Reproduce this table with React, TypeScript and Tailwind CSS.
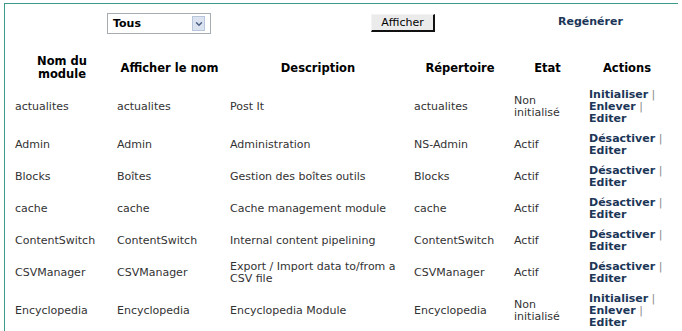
import { ChevronDown } from "lucide-react";

type Mod = {
  name: string;
  label: string;
  desc: string;
  dir: string;
  active: boolean;
};

const modules: Mod[] = [
  { name: "actualites", label: "actualites", desc: "Post It", dir: "actualites", active: false },
  { name: "Admin", label: "Admin", desc: "Administration", dir: "NS-Admin", active: true },
  { name: "Blocks", label: "Boîtes", desc: "Gestion des boîtes outils", dir: "Blocks", active: true },
  { name: "cache", label: "cache", desc: "Cache management module", dir: "cache", active: true },
  { name: "ContentSwitch", label: "ContentSwitch", desc: "Internal content pipelining", dir: "ContentSwitch", active: true },
  { name: "CSVManager", label: "CSVManager", desc: "Export / Import data to/from a CSV file", dir: "CSVManager", active: true },
  { name: "Encyclopedia", label: "Encyclopedia", desc: "Encyclopedia Module", dir: "Encyclopedia", active: false },
];

function Actions({ active }: { active: boolean }) {
  const link = "font-bold text-[#1c3657]";
  const sep = <span className="text-[#8a8a8a]"> |</span>;
  if (active) {
    return (
      <>
        <span className={link}>Désactiver</span>
        {sep}
        <br />
        <span className={link}>Editer</span>
      </>
    );
  }
  return (
    <>
      <span className={link}>Initialiser</span>
      {sep}
      <br />
      <span className={link}>Enlever</span>
      {sep}
      <br />
      <span className={link}>Editer</span>
    </>
  );
}

export default function App() {
  const th = "px-1 pt-[5px] pb-[4px] text-center align-middle font-bold text-[11.5px] leading-[13px] text-black";
  const td = "px-1 py-1 align-middle";

  return (
    <div className="w-[682px] h-[331px] overflow-hidden bg-white font-['DejaVu_Sans',Verdana,sans-serif] text-[11px] leading-[12px] text-[#333]">
      <div className="ml-1 mt-[3px] h-[400px] border-t border-l border-[#3a9b8c] w-[674px]">
        {/* ── filtre ─────────────────────────────────────────── */}
        <div className="flex items-start h-[46px]">
          <div className="ml-[102px] mt-[9px] flex h-[21px] w-[104px] items-center justify-between border border-[#a5acb2] bg-white pl-[5px] pr-[5px]">
            <span className="font-bold text-black">Tous</span>
            <span className="flex h-[15px] w-[13px] items-center justify-center border border-[#b8c6dc] bg-[#dbe3f0]">
              <ChevronDown className="h-[10px] w-[10px] text-[#4d6185]" strokeWidth={3.5} />
            </span>
          </div>
          <button className="ml-[160px] mt-[10px] h-[18px] w-[64px] border border-t-[#f3f3f3] border-l-[#f3f3f3] border-r-[#111] border-b-[#111] border-r-2 border-b-2 bg-[#ebebeb] text-[11px] leading-[12px] text-black">
            Afficher
          </button>
          <span className="ml-[123px] mt-[12px] font-bold text-[#1c3657]">Regénérer</span>
        </div>

        {/* ── tableau des modules ────────────────────────────── */}
        <table className="ml-[6px] w-[658px] table-fixed border-collapse">
          <colgroup>
            <col className="w-[102px]" />
            <col className="w-[113px]" />
            <col className="w-[184px]" />
            <col className="w-[100px]" />
            <col className="w-[75px]" />
            <col className="w-[84px]" />
          </colgroup>
          <thead>
            <tr>
              <th className={th}>
                Nom du
                <br />
                module
              </th>
              <th className={th}>Afficher le nom</th>
              <th className={th}>Description</th>
              <th className={th}>Répertoire</th>
              <th className={th}>Etat</th>
              <th className={th}>Actions</th>
            </tr>
          </thead>
          <tbody>
            {modules.map((m) => (
              <tr key={m.name}>
                <td className={td}>{m.name}</td>
                <td className={td}>{m.label}</td>
                <td className={td}>{m.desc}</td>
                <td className={td}>{m.dir}</td>
                <td className={td}>
                  {m.active ? (
                    "Actif"
                  ) : (
                    <>
                      Non
                      <br />
                      initialisé
                    </>
                  )}
                </td>
                <td className={td}>
                  <Actions active={m.active} />
                </td>
              </tr>
            ))}
          </tbody>
        </table>
      </div>
    </div>
  );
}
